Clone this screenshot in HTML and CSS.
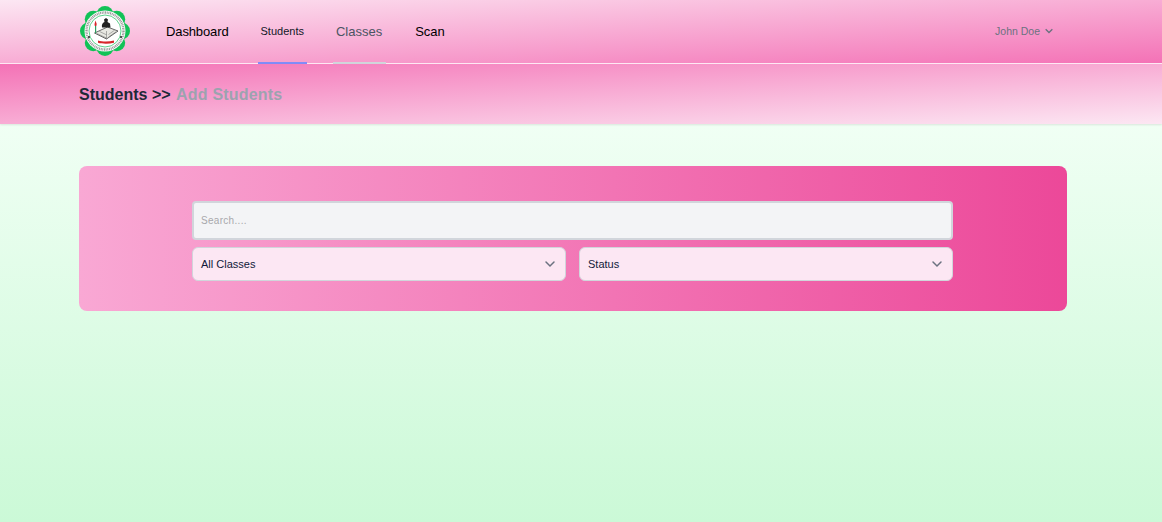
FILE: index.html
```html
<!DOCTYPE html>
<html>
<head>
<meta charset="UTF-8">
<link rel="stylesheet" href="styles.css">
<title>Add Students</title>
</head>
<body>

<header class="topbar">
  <div class="topbar-inner">
    <svg class="logo" viewBox="0 0 52 52" aria-label="School seal">
      <g fill="#12c257">
        <circle cx="26" cy="9.500" r="8.500"/>
        <circle cx="37.700" cy="14.300" r="8.500"/>
        <circle cx="42.500" cy="26" r="8.500"/>
        <circle cx="37.700" cy="37.700" r="8.500"/>
        <circle cx="26" cy="42.500" r="8.500"/>
        <circle cx="14.300" cy="37.700" r="8.500"/>
        <circle cx="9.500" cy="26" r="8.500"/>
        <circle cx="14.300" cy="14.300" r="8.500"/>
      </g>
      <circle cx="26" cy="26" r="20.500" fill="#fff"/>
      <circle cx="26" cy="26" r="18.500" fill="none" stroke="#555" stroke-width="2.400" stroke-dasharray="1 .7" opacity=".6"/>
      <circle cx="26" cy="26" r="16" fill="#fff" stroke="#35c46e" stroke-width=".8"/>
      <path d="M15.500 28l12 6 11.500-8-10.500-4z" fill="#e8e8e2" stroke="#444" stroke-width=".8"/>
      <path d="M27.500 34v-8M18 28.500l9.500 4.500M20.500 26.500l7 3.300M29.500 32l7.500-5.200M29.500 29.500l6-4.200" fill="none" stroke="#666" stroke-width=".5"/>
      <path d="M23 22.500c-.5-3 .5-4.500 2.500-5.500l-.5-2.500 2-1.500 2 1.500-.5 2.500 2.500 1.500.5 4z" fill="#222"/>
      <path d="M15.500 19l1-3.500 1.200 3.500-.4 2h-1.500z" fill="#d8262c"/>
      <path d="M16 21h1.200v7H16z" fill="#2f9e5f"/>
      <path d="M19 35.500c4.500 1.300 11 1.300 16 0v2.300c-5 1.200-11.500 1.200-16 0z" fill="#d8262c"/>
      <circle cx="10" cy="32" r="1" fill="#222"/>
      <circle cx="42" cy="32" r="1" fill="#222"/>
    </svg>
    <nav class="mainnav">
      <a class="navlink navlink-first" href="#">Dashboard</a>
      <a class="navlink navlink-active" href="#">Students</a>
      <a class="navlink navlink-hover" href="#">Classes</a>
      <a class="navlink" href="#">Scan</a>
    </nav>
    <div class="usermenu">
      <span>John Doe</span>
      <svg class="usermenu-arrow" viewBox="4 6 12 10"><path d="M5 7.500l5 5 5-5" fill="none" stroke="currentColor" stroke-width="2"/></svg>
    </div>
  </div>
</header>

<div class="subhead">
  <h1 class="crumbs">Students &gt;&gt; <span class="crumbs-current">Add Students</span></h1>
</div>

<main class="content">
  <section class="filters">
    <div class="filters-inner">
      <input class="search" type="text" placeholder="Search....">
      <div class="selects">
        <div class="select">
          <span>All Classes</span>
          <svg class="select-arrow" viewBox="0 0 20 20"><path d="M6 8l4 4 4-4" fill="none" stroke="currentColor" stroke-width="1.500" stroke-linecap="round"/></svg>
        </div>
        <div class="select">
          <span>Status</span>
          <svg class="select-arrow" viewBox="0 0 20 20"><path d="M6 8l4 4 4-4" fill="none" stroke="currentColor" stroke-width="1.500" stroke-linecap="round"/></svg>
        </div>
      </div>
    </div>
  </section>
</main>

</body>
</html>
```

FILE: styles.css
```css
* { box-sizing: border-box; }

html, body { height: 100%; }

body { margin: 0; overflow: hidden; display: flex; flex-direction: column;
       font-family: "Liberation Sans", Arial, sans-serif; }

.topbar { flex: none; height: 64px; border-bottom: 1px solid #ffe9f4;
          background-image: linear-gradient(to bottom right, #fce7f3, #f472b6); }
.topbar-inner { display: flex; align-items: stretch; height: 64px;
                padding: 0 109px 0 79px; }

.logo { width: 52px; height: 52px; margin-top: 5px; flex: none; }

.mainnav { display: flex; gap: 26px; margin-left: 32px; }
.navlink { display: flex; align-items: center; height: 64px; padding: 0 3px;
           font-size: 13px; color: #000; text-decoration: none;
           border-bottom: 2px solid transparent; }
.navlink-first { letter-spacing: -.12px; }
.navlink-active { font-size: 11px; color: #111827; border-bottom-color: #818cf8; }
.navlink-hover { padding-right: 4px; color: #4b5563; border-bottom-color: #d1d5db; }

.usermenu { display: flex; align-items: center; gap: 5px; margin-left: auto; padding-bottom: 2px;
            font-size: 10.5px; color: #6b7280; }
.usermenu-arrow { width: 8px; height: 7px; }

.subhead { position: relative; flex: none; height: 60px; padding: 2px 79px 0; display: flex; align-items: center;
           background-image: linear-gradient(to bottom right, #f472b6, #fce7f3);
           box-shadow: 0 1px 2px rgba(0,0,0,.1); }
.crumbs { margin: 0; font-size: 16px; font-weight: bold; color: #1f2937; }
.crumbs-current { margin-left: 1px; color: #9ca3af; letter-spacing: .2px; }

.content { flex: 1; padding: 42px 95px 0 79px;
           background-image: linear-gradient(to bottom, #f0fff4, #cbf9d7); }

.filters { height: 145px; padding-top: 35px; border-radius: 8px;
           background-image: linear-gradient(to right, #f9a8d4, #ec4899); }
.filters-inner { width: 761px; margin-left: 113px; }

.search { display: block; width: 100%; height: 39px; padding: 0 7px;
          font: 10px "Liberation Sans", Arial, sans-serif; letter-spacing: .3px;
          background-color: #f3f4f6; border: 2px solid #d1d5db; border-radius: 4px; }
.search::placeholder { color: #a8a8ac; opacity: 1; }

.selects { display: flex; gap: 13px; margin-top: 7px; }
.select { flex: 1; display: flex; align-items: center; justify-content: space-between;
          height: 34px; padding: 0 8px;
          font-size: 11px; color: #111a3a; background-color: #fce7f3;
          border: 1px solid #d1d5db; border-radius: 6px; }
.select-arrow { width: 20px; height: 20px; color: #6b7280; margin-right: -3px; }
```
